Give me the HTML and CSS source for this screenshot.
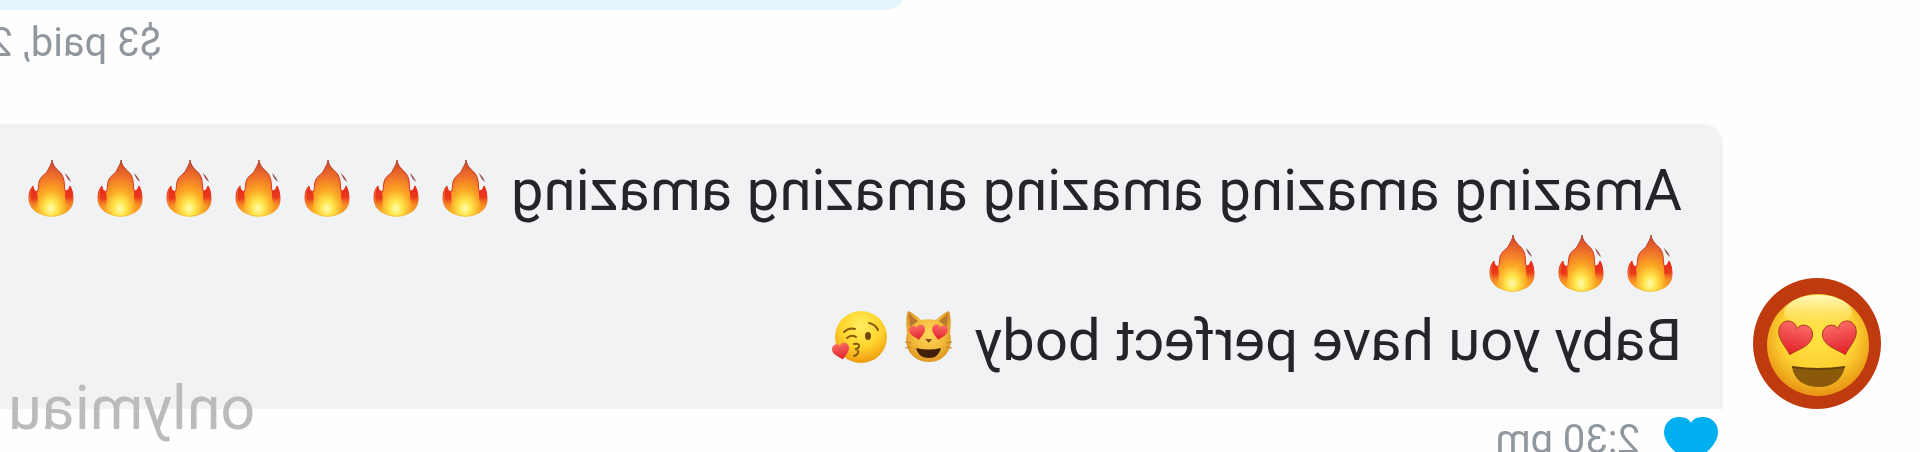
FILE: index.html
```
<!DOCTYPE html>
<html lang="en">
<head>
    <meta charset="UTF-8">
    <meta name="viewport" content="width=device-width, initial-scale=1.0">
    <title>Messages</title>
    <link rel="stylesheet" href="styles.css">
</head>
<body>
    <svg class="sprite" width="0" height="0" aria-hidden="true">
        <defs>
            <radialGradient id="flame-fill" cx="0.5" cy="0.86" r="0.8">
                <stop offset="0" stop-color="#fffbb0"/>
                <stop offset="0.18" stop-color="#ffe54a"/>
                <stop offset="0.42" stop-color="#fba524"/>
                <stop offset="0.7" stop-color="#f0742a"/>
                <stop offset="1" stop-color="#d6492a"/>
            </radialGradient>
            <linearGradient id="flame-edge" x1="0" y1="0" x2="0" y2="1">
                <stop offset="0" stop-color="#a8422c"/>
                <stop offset="0.6" stop-color="#e8321c"/>
                <stop offset="1" stop-color="#f5c234"/>
            </linearGradient>
            <linearGradient id="flame-side" x1="0" y1="0" x2="0" y2="1">
                <stop offset="0" stop-color="#e8281c"/>
                <stop offset="0.5" stop-color="#ea3a1c"/>
                <stop offset="1" stop-color="#f8a020" stop-opacity="0"/>
            </linearGradient>
            <radialGradient id="face-fill" cx="0.5" cy="0.3" r="0.7">
                <stop offset="0" stop-color="#ffee60"/>
                <stop offset="0.55" stop-color="#ffd52e"/>
                <stop offset="1" stop-color="#f09a10"/>
            </radialGradient>
            <radialGradient id="avatar-fill" cx="0.5" cy="0.4" r="0.62">
                <stop offset="0" stop-color="#ffe545"/>
                <stop offset="0.6" stop-color="#fdcf30"/>
                <stop offset="1" stop-color="#e58d10"/>
            </radialGradient>
            <linearGradient id="avatar-shine" x1="0" y1="0" x2="0" y2="1">
                <stop offset="0" stop-color="#fffbc0"/>
                <stop offset="1" stop-color="#ffec70" stop-opacity="0"/>
            </linearGradient>
            <radialGradient id="cat-fill" cx="0.5" cy="0.45" r="0.6">
                <stop offset="0" stop-color="#ffd95a"/>
                <stop offset="0.6" stop-color="#f2b93c"/>
                <stop offset="1" stop-color="#d9921e"/>
            </radialGradient>
            <linearGradient id="heart-fill" x1="0" y1="0" x2="0" y2="1">
                <stop offset="0" stop-color="#fb6a66"/>
                <stop offset="1" stop-color="#e01f26"/>
            </linearGradient>
        </defs>
        <symbol id="heart" viewBox="0 0 40 36">
            <path d="M20 36C14 29 1 22 1 11C1 4 6 0 11 0C15 0 18 2 20 6C22 2 25 0 29 0C34 0 39 4 39 11C39 22 26 29 20 36Z"/>
        </symbol>
        <symbol id="fire" viewBox="0 0 57 57">
            <path d="M28 0C28 4 31 7 33 12C36 15 40 17 41 22C42 26 41 29 43 32C46 31 47 28 47 26C50 29 51 33 51 38C51 46 46 52 39 54C33 57 24 57 18 54C11 52 7 46 7 39C7 34 8 29 10 26C11 29 12 31 15 31C16 26 15 20 18 15C20 11 27 8 28 0Z" fill="url(#flame-fill)" stroke="url(#flame-edge)" stroke-width="1"/>
            <path d="M47 26C51 33 51 44 44 51C42 44 42 38 43 32C46 31 47 28 47 26Z" fill="url(#flame-side)"/>
            <path d="M10 26C6 32 6 42 12 49C15 43 15 37 15 31C12 31 11 29 10 26Z" fill="url(#flame-side)"/>
            <path d="M15 13C13 15 10 18 9 22C12 20 14 17 15 13Z" fill="#9b5450"/>
        </symbol>
        <symbol id="heart-cat" viewBox="0 0 57 57">
            <path d="M7 23C6 15 6 6 8 1C13 3 18 7 21 10C26 9 31 9 36 10C39 7 44 3 49 1C51 6 51 15 50 23C54 39 44 52 28 52C13 52 3 39 7 23Z" fill="url(#cat-fill)"/>
            <path d="M9 4L10 17L18 11ZM48 4L47 17L39 11Z" fill="#b9792c"/>
            <g fill="url(#heart-fill)">
                <use href="#heart" x="31" y="15" width="17" height="15" transform="rotate(10 39 22)"/>
                <use href="#heart" x="9" y="15" width="17" height="15" transform="rotate(-10 17 22)"/>
            </g>
            <path d="M25 29H32L28 33Z" fill="#8a4a1c"/>
            <path d="M16 38Q28 41 41 38C39 45 35 48 28 48C22 48 18 45 16 38Z" fill="#422008"/>
            <path d="M5 32L11 33M5 38L11 37M52 32L46 33M52 38L46 37" stroke="#b98530" stroke-width="1"/>
        </symbol>
        <symbol id="kiss" viewBox="0 0 57 57">
            <circle cx="27" cy="27" r="26" fill="url(#face-fill)"/>
            <g fill="none" stroke="#87570c" stroke-width="2" stroke-linecap="round">
                <path d="M10 20Q13 14 19 13"/>
                <path d="M33 19Q39 17 44 22"/>
                <path d="M32 27Q37 24 41 28"/>
                <path d="M34 34Q28 33 29 37Q30 39 33 39Q29 40 30 43Q31 45 34 46"/>
            </g>
            <ellipse cx="20" cy="26" rx="3" ry="4" fill="#70480c"/>
            <use href="#heart" x="38" y="33" width="18" height="17" fill="url(#heart-fill)" transform="rotate(12 47 41)"/>
        </symbol>
    </svg>

    <main class="chat">
        <section class="sent">
            <div class="sent-bubble"></div>
            <p class="meta sent-meta">$3 paid, 2</p>
        </section>

        <section class="received">
            <svg class="avatar" viewBox="0 0 128 131" role="img" aria-label="Heart eyes avatar">
                <ellipse cx="64" cy="65.5" rx="64" ry="65.5" fill="#bf3a0e"/>
                <ellipse cx="63" cy="67" rx="51" ry="51" fill="url(#avatar-fill)"/>
                <ellipse cx="63" cy="35" rx="34" ry="18" fill="url(#avatar-shine)"/>
                <g fill="url(#heart-fill)" stroke="#a83a1c" stroke-width="1">
                    <use href="#heart" x="22" y="44" width="36" height="34" transform="rotate(15 40 61)"/>
                    <use href="#heart" x="69" y="44" width="36" height="34" transform="rotate(-15 87 61)"/>
                </g>
                <path d="M36 89Q63 93 89 89C87 102 77 109 62 109C49 109 39 102 36 89Z" fill="#8a5a0a"/>
                <path d="M36 89Q63 93 89 89" fill="none" stroke="#68420a" stroke-width="2"/>
            </svg>
            <div class="message">
                <p class="bubble">Amazing amazing amazing amazing amazing <svg class="emoji"><use href="#fire"/></svg><svg class="emoji"><use href="#fire"/></svg><svg class="emoji"><use href="#fire"/></svg><svg class="emoji"><use href="#fire"/></svg><svg class="emoji"><use href="#fire"/></svg><svg class="emoji"><use href="#fire"/></svg><svg class="emoji"><use href="#fire"/></svg><br>
                <svg class="emoji"><use href="#fire"/></svg><svg class="emoji"><use href="#fire"/></svg><svg class="emoji"><use href="#fire"/></svg><br>
                Baby you have perfect body <svg class="emoji"><use href="#heart-cat"/></svg><svg class="emoji"><use href="#kiss"/></svg></p>
                <div class="meta message-meta">
                    <svg class="like" viewBox="0 0 54 48" role="img" aria-label="Liked">
                        <path d="M27 48C20 41 0 30 0 15C0 6 7 0 15 0C21 0 25 2 27 6C29 2 33 0 39 0C47 0 54 6 54 15C54 30 34 41 27 48Z" fill="#00aff0"/>
                    </svg>
                    <time>2:30 pm</time>
                </div>
            </div>
        </section>

        <span class="watermark">onlymiau</span>
    </main>
</body>
</html>
```
FILE: styles.css
```
body {
    margin: 0;
    background-color: #fefefe;
    color: #232529;
    font-family: Roboto, sans-serif;
    overflow: hidden;
}
p {
    margin: 0;
}
.sprite {
    position: absolute;
}
/* the whole conversation is shown mirrored */
.chat {
    position: relative;
    height: 100vh;
    overflow: hidden;
    transform: scaleX(-1);
}
.sent {
    display: flex;
    flex-direction: column;
    align-items: flex-end;
    margin-bottom: 58px;
}
.sent-bubble {
    width: 47%;
    height: 10px;
    background-color: #e4f4fd;
    border-bottom-left-radius: 20px 10px;
}
.meta {
    color: #90979f;
    font-size: 40px;
    line-height: 46px;
    white-space: nowrap;
}
.sent-meta {
    width: 162px;
    margin-top: 10px;
}
.received {
    display: flex;
    align-items: flex-start;
    gap: 30px;
    padding-left: 39px;
}
.avatar {
    flex: none;
    width: 128px;
    height: 131px;
    margin-top: 154px;
}
.message {
    flex: 1;
    min-width: 0;
}
.bubble {
    padding: 29px 0 31px 41px;
    background-color: #f1f2f4;
    border-top-left-radius: 20px;
    font-size: 58px;
    line-height: 75px;
    white-space: nowrap;
}
.emoji {
    width: 57px;
    height: 57px;
    margin: 0 9px 0 3px;
    vertical-align: -7px;
}
.message-meta {
    display: flex;
    align-items: flex-start;
    gap: 24px;
    padding: 8px 0 0 5px;
}
.like {
    width: 54px;
    height: 48px;
}
.watermark {
    position: absolute;
    right: 8px;
    bottom: 6px;
    color: #bbbbbb;
    font-size: 61px;
    line-height: 76px;
}
```
